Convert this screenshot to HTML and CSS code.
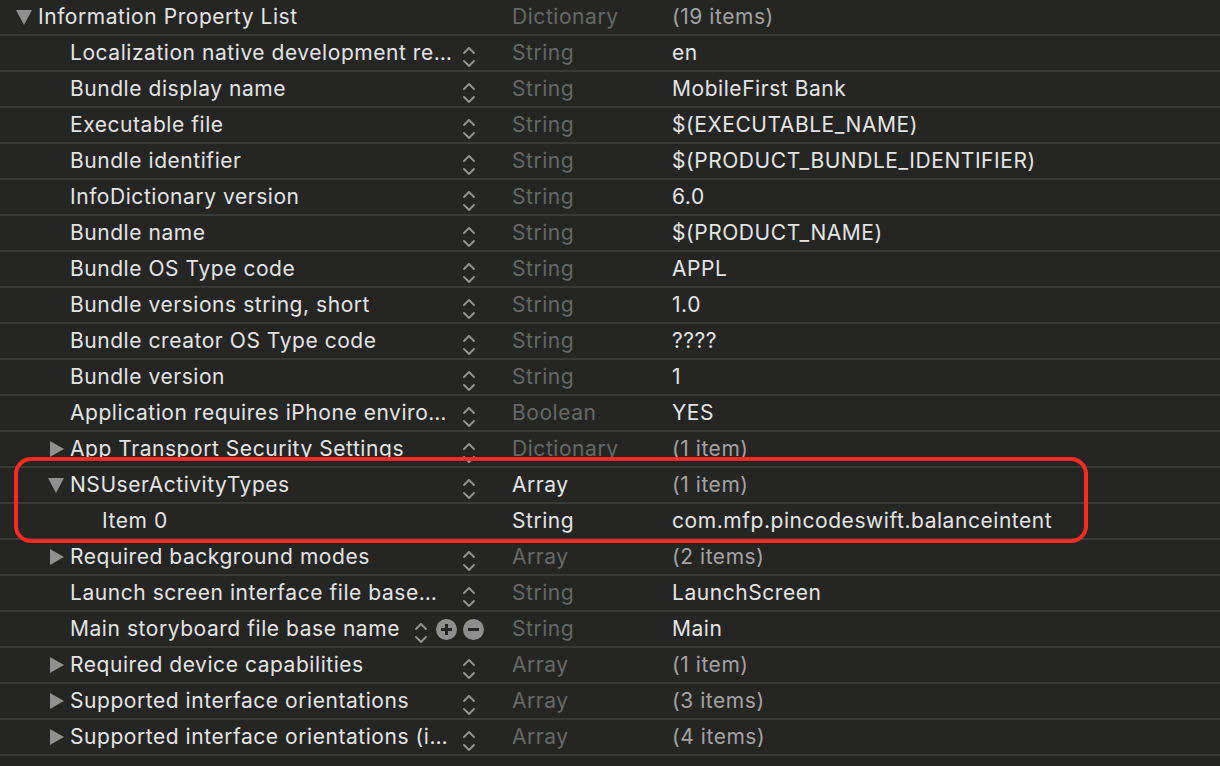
FILE: index.html
```html
<!DOCTYPE html>
<html>
<head>
<meta charset="utf-8">
<link rel="stylesheet" href="styles.css">
</head>
<body>
<div class="plist">
  <div class="row">
    <div class="key lvl0"><span class="tri down"></span><span class="name">Information Property List</span></div>
    <div class="type dim">Dictionary</div>
    <div class="value count">(19 items)</div>
  </div>
  <div class="row">
    <div class="key lvl1"><span class="tri none"></span><span class="name">Localization native development re…</span><span class="stepper"></span></div>
    <div class="type dim">String</div>
    <div class="value">en</div>
  </div>
  <div class="row">
    <div class="key lvl1"><span class="tri none"></span><span class="name">Bundle display name</span><span class="stepper"></span></div>
    <div class="type dim">String</div>
    <div class="value">MobileFirst Bank</div>
  </div>
  <div class="row">
    <div class="key lvl1"><span class="tri none"></span><span class="name">Executable file</span><span class="stepper"></span></div>
    <div class="type dim">String</div>
    <div class="value">$(EXECUTABLE_NAME)</div>
  </div>
  <div class="row">
    <div class="key lvl1"><span class="tri none"></span><span class="name">Bundle identifier</span><span class="stepper"></span></div>
    <div class="type dim">String</div>
    <div class="value">$(PRODUCT_BUNDLE_IDENTIFIER)</div>
  </div>
  <div class="row">
    <div class="key lvl1"><span class="tri none"></span><span class="name">InfoDictionary version</span><span class="stepper"></span></div>
    <div class="type dim">String</div>
    <div class="value">6.0</div>
  </div>
  <div class="row">
    <div class="key lvl1"><span class="tri none"></span><span class="name">Bundle name</span><span class="stepper"></span></div>
    <div class="type dim">String</div>
    <div class="value">$(PRODUCT_NAME)</div>
  </div>
  <div class="row">
    <div class="key lvl1"><span class="tri none"></span><span class="name">Bundle OS Type code</span><span class="stepper"></span></div>
    <div class="type dim">String</div>
    <div class="value">APPL</div>
  </div>
  <div class="row">
    <div class="key lvl1"><span class="tri none"></span><span class="name">Bundle versions string, short</span><span class="stepper"></span></div>
    <div class="type dim">String</div>
    <div class="value">1.0</div>
  </div>
  <div class="row">
    <div class="key lvl1"><span class="tri none"></span><span class="name">Bundle creator OS Type code</span><span class="stepper"></span></div>
    <div class="type dim">String</div>
    <div class="value">????</div>
  </div>
  <div class="row">
    <div class="key lvl1"><span class="tri none"></span><span class="name">Bundle version</span><span class="stepper"></span></div>
    <div class="type dim">String</div>
    <div class="value">1</div>
  </div>
  <div class="row">
    <div class="key lvl1"><span class="tri none"></span><span class="name">Application requires iPhone enviro…</span><span class="stepper"></span></div>
    <div class="type dim">Boolean</div>
    <div class="value">YES</div>
  </div>
  <div class="row">
    <div class="key lvl1"><span class="tri right"></span><span class="name">App Transport Security Settings</span><span class="stepper"></span></div>
    <div class="type dim">Dictionary</div>
    <div class="value count">(1 item)</div>
  </div>
  <div class="row">
    <div class="key lvl1"><span class="tri down"></span><span class="name">NSUserActivityTypes</span><span class="stepper"></span></div>
    <div class="type">Array</div>
    <div class="value count">(1 item)</div>
  </div>
  <div class="row">
    <div class="key lvl2"><span class="tri none"></span><span class="name">Item 0</span></div>
    <div class="type">String</div>
    <div class="value">com.mfp.pincodeswift.balanceintent</div>
  </div>
  <div class="row">
    <div class="key lvl1"><span class="tri right"></span><span class="name">Required background modes</span><span class="stepper"></span></div>
    <div class="type dim">Array</div>
    <div class="value count">(2 items)</div>
  </div>
  <div class="row">
    <div class="key lvl1"><span class="tri none"></span><span class="name">Launch screen interface file base…</span><span class="stepper"></span></div>
    <div class="type dim">String</div>
    <div class="value">LaunchScreen</div>
  </div>
  <div class="row">
    <div class="key lvl1 hover"><span class="tri none"></span><span class="name">Main storyboard file base name</span><span class="stepper"></span><span class="btn plus"></span><span class="btn minus"></span></div>
    <div class="type dim">String</div>
    <div class="value">Main</div>
  </div>
  <div class="row">
    <div class="key lvl1"><span class="tri right"></span><span class="name">Required device capabilities</span><span class="stepper"></span></div>
    <div class="type dim">Array</div>
    <div class="value count">(1 item)</div>
  </div>
  <div class="row">
    <div class="key lvl1"><span class="tri right"></span><span class="name">Supported interface orientations</span><span class="stepper"></span></div>
    <div class="type dim">Array</div>
    <div class="value count">(3 items)</div>
  </div>
  <div class="row">
    <div class="key lvl1"><span class="tri right"></span><span class="name">Supported interface orientations (i…</span><span class="stepper"></span></div>
    <div class="type dim">Array</div>
    <div class="value count">(4 items)</div>
  </div>
  <div class="highlight"></div>
</div>
</body>
</html>
```

FILE: styles.css
```css
html, body {
  margin: 0;
  padding: 0;
  background: #252624;
  height: 100%;
  overflow: hidden;
}

.plist {
  position: relative;
  font-family: Inter, "Noto Sans", "Liberation Sans", sans-serif;
  font-size: 21px;
  letter-spacing: 0.55px;
  color: #e4e4e4;
}

.row {
  display: grid;
  grid-template-columns: 490px 182px 1fr;
  height: 34px;
  border-bottom: 2px solid #393a38;
  align-items: center;
  line-height: 24px;
}

.type, .value, .name {
  padding-bottom: 1px;
}

.key {
  display: flex;
  align-items: center;
  height: 34px;
  min-width: 0;
  padding-right: 14px;
  box-sizing: border-box;
}

.key.lvl0 { padding-left: 16px; }
.key.lvl1 { padding-left: 48px; }
.key.lvl2 { padding-left: 80px; }
.key.hover { padding-right: 6px; }

.tri {
  flex: 0 0 22px;
  height: 16px;
  position: relative;
}

.tri.down::before {
  content: "";
  position: absolute;
  left: 0;
  top: 1px;
  border-left: 8px solid transparent;
  border-right: 8px solid transparent;
  border-top: 15px solid #8f8f8f;
}

.tri.right::before {
  content: "";
  position: absolute;
  left: 2px;
  top: 0;
  border-top: 8px solid transparent;
  border-bottom: 8px solid transparent;
  border-left: 14px solid #8f8f8f;
}

.name {
  flex: 1 1 auto;
  min-width: 0;
  white-space: nowrap;
  overflow: hidden;
  text-overflow: ellipsis;
}

.stepper {
  flex: 0 0 14px;
  height: 24px;
  margin-left: 8px;
  margin-top: 8px;
  background:
    url("data:image/svg+xml;utf8,<svg xmlns='http://www.w3.org/2000/svg' width='14' height='24' viewBox='0 0 14 24'><path d='M2 8 L7 3 L12 8' fill='none' stroke='%23909090' stroke-width='2' stroke-linecap='round' stroke-linejoin='round'/><path d='M2 16 L7 21 L12 16' fill='none' stroke='%23909090' stroke-width='2' stroke-linecap='round' stroke-linejoin='round'/></svg>") no-repeat center;
}

.btn {
  flex: 0 0 21px;
  height: 21px;
  border-radius: 50%;
  background: #8e8e8e;
  position: relative;
  margin-left: 6px;
}

.btn.plus { margin-left: 8px; }

.btn::before {
  content: "";
  position: absolute;
  left: 5px;
  top: 9px;
  width: 11px;
  height: 3px;
  background: #252624;
}

.btn.plus::after {
  content: "";
  position: absolute;
  left: 9px;
  top: 5px;
  width: 3px;
  height: 11px;
  background: #252624;
}

.type {
  padding-left: 22px;
  white-space: nowrap;
  color: #e4e4e4;
}

.type.dim { color: #666766; }

.value {
  white-space: nowrap;
  color: #e4e4e4;
}

.value.count { color: #a2a2a2; }

.highlight {
  position: absolute;
  left: 14px;
  top: 457px;
  width: 1074px;
  height: 86px;
  box-sizing: border-box;
  border: 4px solid #fb2b22;
  border-radius: 17px;
}
```
